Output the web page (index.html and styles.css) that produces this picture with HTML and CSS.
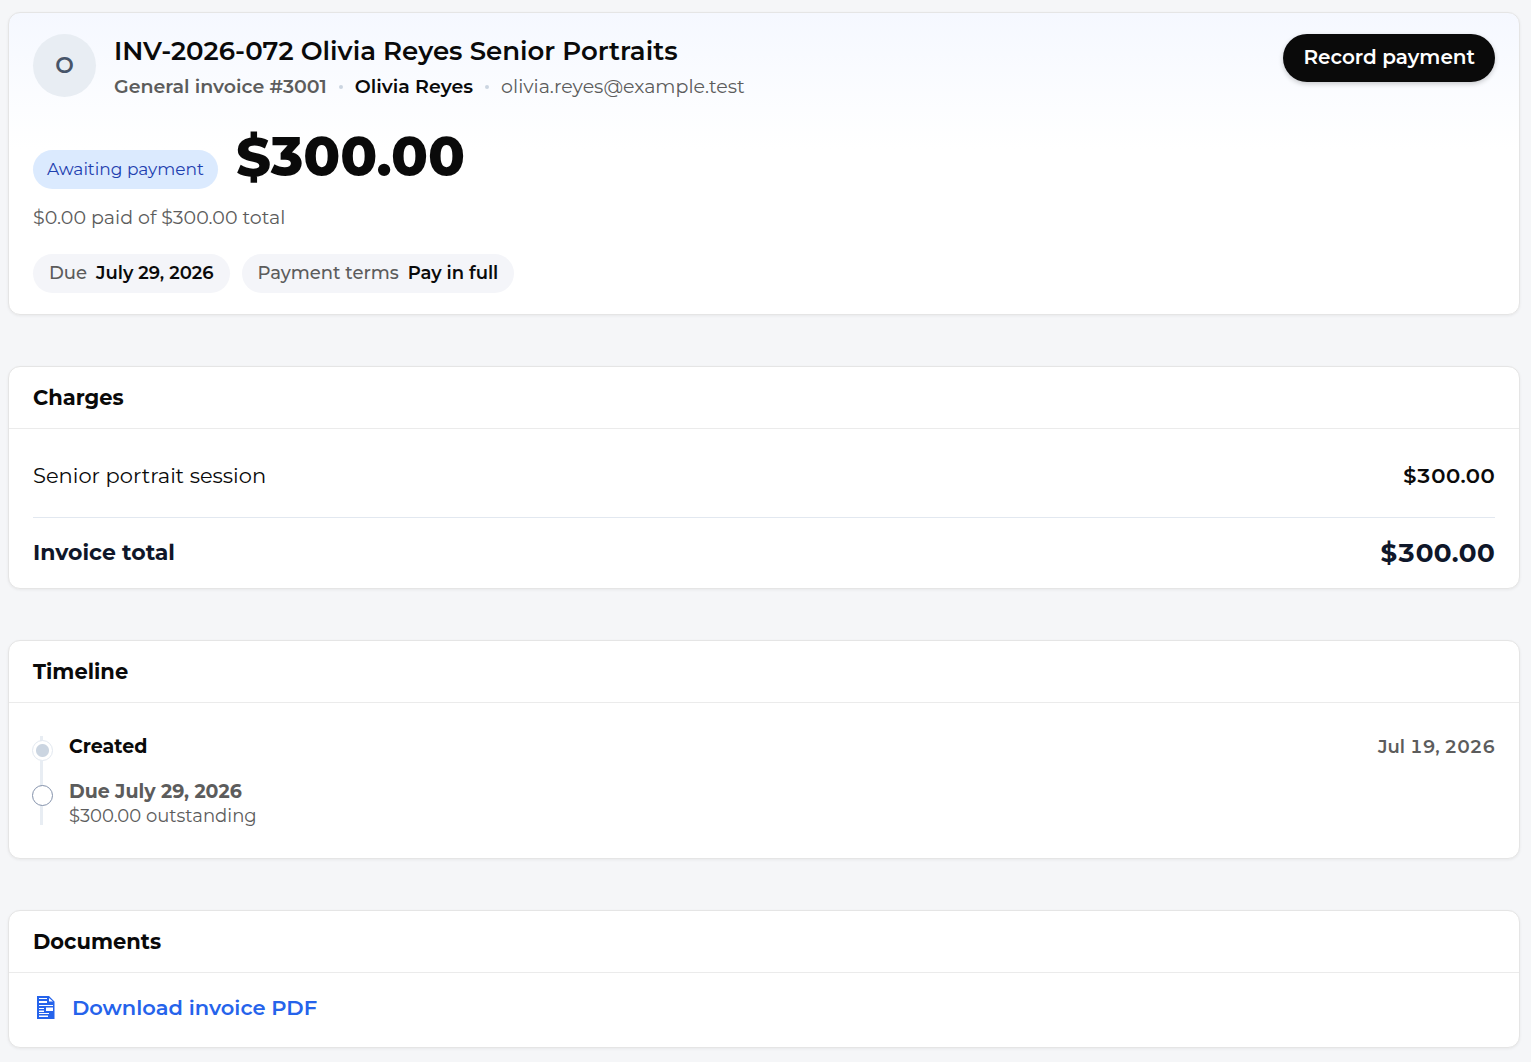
FILE: index.html
```html
<!DOCTYPE html>
<html lang="en">
<head>
	<meta charset="utf-8">
	<meta name="viewport" content="width=device-width, initial-scale=1">
	<title>INV-2026-072 Olivia Reyes Senior Portraits</title>
	<link rel="stylesheet" href="styles.css">
</head>
<body>
	<main class="invoice">

		<section class="card summary">
			<header class="summary-head">
				<div class="avatar">O</div>
				<div class="summary-title">
					<h1>INV-2026-072 Olivia Reyes Senior Portraits</h1>
					<p class="meta">
						<span class="meta-kind">General invoice #3001</span>
						<span class="dot"></span>
						<span class="meta-client">Olivia Reyes</span>
						<span class="dot"></span>
						<span class="meta-email">olivia.reyes@example.test</span>
					</p>
				</div>
				<button type="button" class="btn">Record payment</button>
			</header>
			<div class="balance">
				<span class="status">Awaiting payment</span>
				<strong class="amount">$300.00</strong>
			</div>
			<p class="paid">$0.00 paid of $300.00 total</p>
			<ul class="chips">
				<li>Due <b>July 29, 2026</b></li>
				<li>Payment terms <b>Pay in full</b></li>
			</ul>
		</section>

		<section class="card">
			<h2>Charges</h2>
			<div class="charges-wrap">
				<table class="charges">
					<tbody>
						<tr>
							<td>Senior portrait session</td>
							<td class="price">$300.00</td>
						</tr>
					</tbody>
					<tfoot>
						<tr>
							<th scope="row">Invoice total</th>
							<td class="price">$300.00</td>
						</tr>
					</tfoot>
				</table>
			</div>
		</section>

		<section class="card">
			<h2>Timeline</h2>
			<ol class="timeline">
				<li class="done">
					<span class="marker"></span>
					<div class="event">Created</div>
					<time datetime="2026-07-19">Jul 19, 2026</time>
				</li>
				<li class="pending">
					<span class="marker"></span>
					<div class="event">Due July 29, 2026 <small>$300.00 outstanding</small></div>
				</li>
			</ol>
		</section>

		<section class="card">
			<h2>Documents</h2>
			<div class="documents">
				<a href="#invoice-pdf" class="download">
					<svg class="file-icon" viewBox="0 1 18 24" width="18" height="24" aria-hidden="true">
						<path fill="#2563eb" fill-rule="evenodd" d="M0 1H12L17.500 6.500V24H0ZM2 3V4H10V3ZM12 3V6.500H16ZM2 6V8H10V6ZM2 10V11H16V10ZM2 13V14H7V13ZM9 12.500V16H16V12.500ZM2 15.500V17H7V15.500ZM2 18V19H12V18ZM2 20.500V22H11V20.500Z"/>
					</svg>
					Download invoice PDF
				</a>
			</div>
		</section>

	</main>
</body>
</html>
```
FILE: styles.css
```css
* {
	box-sizing: border-box;
}
body {
	margin: 0;
	padding: 12px 11px 14px 8px;
	background-color: #f5f6f8;
	color: #0a0a0a;
	font-family: Montserrat, Inter, sans-serif;
	font-size: 20px;
	line-height: 24px;
}
h1, h2, p, ul, ol {
	margin: 0;
	padding: 0;
}
li {
	list-style: none;
}

.invoice {
	display: flex;
	flex-direction: column;
	gap: 51px;
}
.card {
	background-color: white;
	border: 1px solid #e5e5e5;
	border-radius: 12px;
	box-shadow: 0 1px 3px rgba(0, 0, 0, 0.06);
}
.card h2 {
	padding: 17px 24px 16px;
	border-bottom: 1px solid #ebebeb;
	font-size: 21px;
	font-weight: 700;
	line-height: 28px;
}

/* summary */
.summary {
	padding: 21px 24px;
	background-image: linear-gradient(#f5f8ff, white 136px);
}
.summary-head {
	display: flex;
	align-items: flex-start;
	gap: 18px;
}
.avatar {
	flex: none;
	width: 63px;
	height: 63px;
	border-radius: 50%;
	background-color: #e8edf3;
	color: #475569;
	font-size: 22px;
	font-weight: 600;
	line-height: 64px;
	text-align: center;
}
.summary-title {
	flex: 1;
}
.summary h1 {
	font-size: 26px;
	font-weight: 600;
	line-height: 35px;
}
.meta {
	display: flex;
	flex-wrap: wrap;
	align-items: center;
	gap: 0 12px;
	line-height: 35px;
	color: #5c5c5c;
	font-size: 19px;
}
.meta-kind {
	font-weight: 600;
}
.meta-client {
	color: #0a0a0a;
	font-weight: 600;
}
.dot {
	width: 4px;
	height: 4px;
	border-radius: 50%;
	background-color: #cbd5e1;
}
.btn {
	height: 48px;
	padding: 0 20px 2px;
	border: 0;
	border-radius: 24px;
	background-color: #0a0a0a;
	color: white;
	font: inherit;
	font-weight: 600;
	box-shadow: 0 2px 5px rgba(0, 0, 0, 0.2);
	cursor: pointer;
}
.balance {
	display: flex;
	align-items: flex-end;
	gap: 18px;
	margin-top: 21px;
}
.status {
	padding: 0 14px;
	border-radius: 20px;
	background-color: #dbeafe;
	color: #1e40af;
	font-size: 17px;
	line-height: 39px;
}
.amount {
	font-size: 54px;
	font-weight: 800;
	line-height: 64px;
}
.paid {
	margin-top: 13px;
	color: #5c5c5c;
	font-size: 19px;
	line-height: 32px;
}
.chips {
	display: flex;
	flex-wrap: wrap;
	gap: 12px;
	margin-top: 20px;
}
.chips li {
	padding: 0 16px;
	border-radius: 20px;
	background-color: #f4f5f9;
	color: #5c5c5c;
	font-size: 18px;
	font-weight: 500;
	line-height: 39px;
}
.chips b {
	margin-left: 4px;
	color: #0a0a0a;
	font-weight: 600;
}

/* charges */
.charges-wrap {
	padding: 0 24px;
}
.charges {
	width: 100%;
	border-collapse: collapse;
	font-size: 21px;
}
.charges td, .charges th {
	padding: 0;
	text-align: left;
}
.charges tbody td {
	height: 88px;
	padding-top: 6px;
}
.charges tfoot td, .charges tfoot th {
	height: 71px;
	border-top: 1px solid #e2e8f0;
	color: #0f172a;
	font-size: 22px;
	font-weight: 700;
}
.charges .price {
	font-weight: 600;
	font-variant-numeric: tabular-nums;
	text-align: right;
}
.charges tfoot .price {
	font-size: 26px;
	font-weight: 700;
}

/* timeline */
.timeline {
	padding: 31px 24px 29px;
}
.timeline li {
	position: relative;
	display: flex;
	align-items: flex-start;
	gap: 18px;
	padding-left: 36px;
}
.timeline li + li {
	padding-top: 19px;
}
.timeline li::before {
	content: "";
	position: absolute;
	top: 2px;
	bottom: 0;
	left: 7px;
	width: 3px;
	background-color: #e8edf3;
}
.timeline li:last-child::before {
	top: 0;
	bottom: 4px;
}
.timeline .marker {
	position: absolute;
	top: 6px;
	left: -1px;
	width: 21px;
	height: 21px;
	border: 1px solid #e2e8f0;
	border-radius: 50%;
	background-color: white;
}
.timeline li + li .marker {
	top: 25px;
}
.done .marker {
	background-image: radial-gradient(circle, #cbd5e1 6px, white 7px);
}
.timeline .pending .marker {
	border-color: #8492ab;
}
.event {
	flex: 1;
	font-size: 19px;
	font-weight: 700;
	line-height: 25px;
}
.event small {
	display: block;
	font-size: 18px;
	font-weight: 400;
}
.pending .event {
	color: #5c5c5c;
}
.timeline time {
	color: #5c5c5c;
	font-size: 18px;
	font-weight: 600;
	font-variant-numeric: tabular-nums;
	line-height: 26px;
}

/* documents */
.documents {
	padding: 19px 24px 24px;
}
.download {
	display: flex;
	align-items: center;
	gap: 17px;
	width: fit-content;
	padding-left: 4px;
	color: #2563eb;
	font-size: 21px;
	font-weight: 600;
	line-height: 31px;
	text-decoration: none;
}
```
